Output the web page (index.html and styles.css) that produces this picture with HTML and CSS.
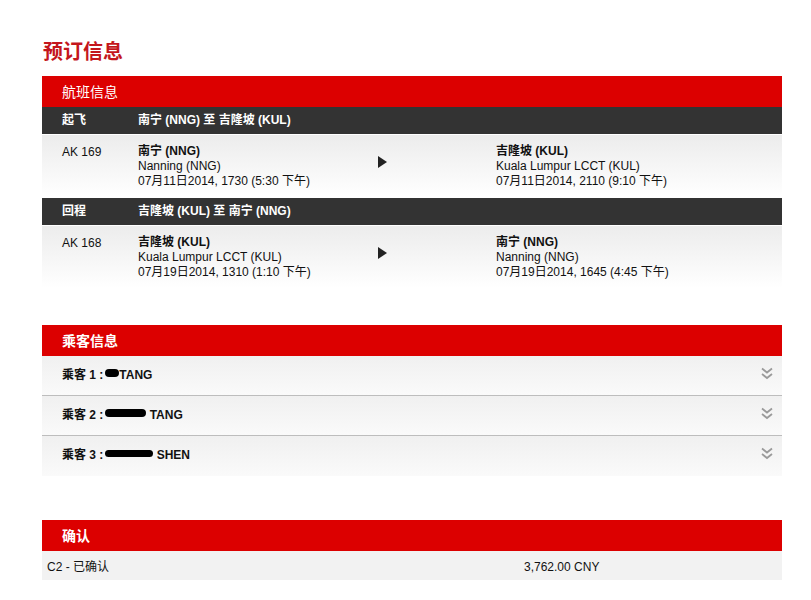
FILE: index.html
```html
<!DOCTYPE html>
<html lang="zh">
<head>
<meta charset="utf-8">
<title>预订信息</title>
<link rel="stylesheet" href="styles.css">
</head>
<body>
<div class="page">
  <h1 class="title">预订信息</h1>

  <section class="section">
    <div class="sec-head">航班信息</div>

    <div class="leg-head"><span class="c1">起飞</span><span class="c2">南宁 (NNG) 至 吉隆坡 (KUL)</span></div>
    <div class="leg-row">
      <div class="c1 fno">AK 169</div>
      <div class="c2 place">
        <b>南宁 (NNG)</b>
        <span>Nanning (NNG)</span>
        <span>07月11日2014, 1730 (5:30 下午)</span>
      </div>
      <div class="arrow-col"><span class="tri"></span></div>
      <div class="place">
        <b>吉隆坡 (KUL)</b>
        <span>Kuala Lumpur LCCT (KUL)</span>
        <span>07月11日2014, 2110 (9:10 下午)</span>
      </div>
    </div>

    <div class="leg-head"><span class="c1">回程</span><span class="c2">吉隆坡 (KUL) 至 南宁 (NNG)</span></div>
    <div class="leg-row">
      <div class="c1 fno">AK 168</div>
      <div class="c2 place">
        <b>吉隆坡 (KUL)</b>
        <span>Kuala Lumpur LCCT (KUL)</span>
        <span>07月19日2014, 1310 (1:10 下午)</span>
      </div>
      <div class="arrow-col"><span class="tri"></span></div>
      <div class="place">
        <b>南宁 (NNG)</b>
        <span>Nanning (NNG)</span>
        <span>07月19日2014, 1645 (4:45 下午)</span>
      </div>
    </div>
  </section>

  <section class="section sec-pax">
    <div class="sec-head bold">乘客信息</div>
    <div class="pax">
      <span class="pax-name">乘客 1 :<i class="blot b1"></i>TANG</span>
      <svg class="chev" width="12" height="13" viewBox="0 0 12 13"><path d="M1 1.5l5 4 5-4M1 7l5 4 5-4" fill="none" stroke="#9a9a9a" stroke-width="1.8"/></svg>
    </div>
    <div class="pax">
      <span class="pax-name">乘客 2 :<i class="blot b2"></i> TANG</span>
      <svg class="chev" width="12" height="13" viewBox="0 0 12 13"><path d="M1 1.5l5 4 5-4M1 7l5 4 5-4" fill="none" stroke="#9a9a9a" stroke-width="1.8"/></svg>
    </div>
    <div class="pax last">
      <span class="pax-name">乘客 3 :<i class="blot b3"></i> SHEN</span>
      <svg class="chev" width="12" height="13" viewBox="0 0 12 13"><path d="M1 1.5l5 4 5-4M1 7l5 4 5-4" fill="none" stroke="#9a9a9a" stroke-width="1.8"/></svg>
    </div>
  </section>

  <section class="section sec-confirm">
    <div class="sec-head bold">确认</div>
    <div class="confirm-row">
      <span class="status">C2 - 已确认</span>
      <span class="amount">3,762.00 CNY</span>
    </div>
  </section>
</div>
</body>
</html>
```
FILE: styles.css
```css
html, body {
  margin: 0;
  padding: 0;
  background: #fff;
}
body {
  font-family: "Liberation Sans", Arial, "Noto Sans CJK SC", sans-serif;
  font-size: 12px;
  color: #111;
}
.page {
  width: 740px;
  padding: 40px 0 0 42px;
}
.title {
  margin: 0 0 11px 1px;
  font-size: 20px;
  line-height: 25px;
  font-weight: bold;
  color: #c4161c;
}
.section {
  display: flex;
  flex-direction: column;
}
.sec-head {
  height: 31px;
  line-height: 32px;
  padding-left: 20px;
  background: #dc0000;
  color: #fff;
  font-size: 14px;
}
.sec-head.bold {
  font-weight: bold;
}
.leg-head {
  display: flex;
  height: 27px;
  line-height: 27px;
  background: #333;
  color: #fff;
  font-weight: bold;
  padding-left: 20px;
  border-bottom: 1px solid #fff;
}
.c1 {
  width: 76px;
  flex: none;
}
.c2 {
  width: 240px;
  flex: none;
}
.leg-row {
  display: flex;
  height: 62px;
  padding: 9px 0 0 20px;
  box-sizing: border-box;
  background: linear-gradient(#ececec, #fff);
  line-height: 15px;
}
.leg-row + .leg-head {
  margin-top: 1px;
}
.fno {
  padding-top: 1px;
}
.place {
  display: flex;
  flex-direction: column;
}
.place b {
  font-weight: bold;
}
.arrow-col {
  width: 118px;
  flex: none;
  padding-top: 12px;
}
.tri {
  display: block;
  width: 0;
  height: 0;
  border-top: 6px solid transparent;
  border-bottom: 6px solid transparent;
  border-left: 9px solid #222;
}
.sec-pax {
  margin-top: 37px;
}
.pax {
  display: flex;
  justify-content: space-between;
  align-items: flex-start;
  height: 40px;
  box-sizing: border-box;
  padding: 12px 9px 0 20px;
  background: linear-gradient(#f0f0f0, #fafafa);
  border-bottom: 1px solid #bdbdbd;
}
.pax.last {
  border-bottom: none;
}
.pax-name {
  font-weight: bold;
  line-height: 15px;
}
.blot {
  display: inline-block;
  vertical-align: 2px;
  height: 8px;
  background: #000;
  border-radius: 4px;
  margin-left: 2px;
}
.b1 { width: 14px; }
.b2 { width: 41px; }
.b3 { width: 48px; height: 7px; }
.chev {
  margin-top: -1px;
}
.sec-confirm {
  margin-top: 44px;
}
.confirm-row {
  display: flex;
  height: 29px;
  line-height: 32px;
  padding-left: 5px;
  background: #f2f2f2;
}
.status {
  width: 477px;
}
```
